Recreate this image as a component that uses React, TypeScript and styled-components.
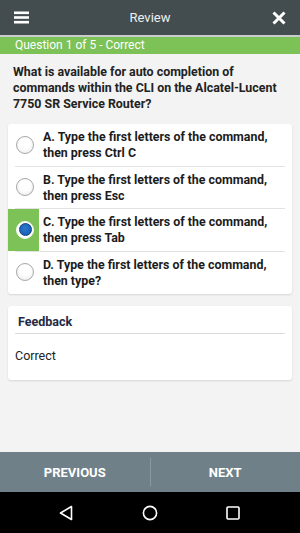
import React from "react";
import styled, { createGlobalStyle } from "styled-components";

const Global = createGlobalStyle`
  html, body { margin: 0; padding: 0; }
  body { font-family: Roboto, "Noto Sans", Arial, sans-serif; background: #f3f3f3; }
  * { box-sizing: border-box; }
`;

const Screen = styled.div`
  width: 300px;
  height: 533px;
  display: flex;
  flex-direction: column;
  background: #f3f3f3;
  overflow: hidden;
`;

const Header = styled.div`
  height: 37px;
  background: #434d50;
  border-bottom: 2px solid #c8cccc;
  display: flex;
  align-items: center;
  justify-content: space-between;
  padding: 0 12px 0 12px;
  color: #fff;
`;

const Title = styled.div`
  font-size: 13px;
  color: #eef0f0;
`;

const IconBtn = styled.div`
  width: 18px;
  height: 18px;
  display: flex;
  align-items: center;
  justify-content: center;
`;

const StatusBar = styled.div`
  height: 17px;
  background: #7cc256;
  color: #fff;
  font-size: 12px;
  line-height: 17px;
  padding-left: 15px;
`;

const Question = styled.div`
  padding: 10px 13px 12px 13px;
  font-size: 12.4px;
  font-weight: 700;
  line-height: 16px;
  color: #222;
  white-space: nowrap;
`;

const Card = styled.div`
  margin: 0 8px;
  background: #fff;
  border-radius: 3px;
  box-shadow: 0 1px 2px rgba(0, 0, 0, 0.12);
`;

const Options = styled(Card)`
  display: flex;
  flex-direction: column;
`;

const Row = styled.div<{ $last?: boolean }>`
  position: relative;
  height: 42.5px;
  display: flex;
  align-items: stretch;
  &::after {
    content: "";
    display: ${(p) => (p.$last ? "none" : "block")};
    position: absolute;
    left: 7px;
    right: 7px;
    bottom: 0;
    height: 1px;
    background: #e2e2e2;
  }
`;

const RadioCell = styled.div<{ $selected?: boolean }>`
  width: 31px;
  flex: none;
  display: flex;
  align-items: center;
  padding-left: 8px;
  background: ${(p) => (p.$selected ? "#7cc256" : "transparent")};
  margin-bottom: 1px;
`;

const Radio = styled.div<{ $selected?: boolean }>`
  width: 18px;
  height: 18px;
  border-radius: 50%;
  border: 1px solid ${(p) => (p.$selected ? "#f4f4f4" : "#a8a8a8")};
  background: ${(p) =>
    p.$selected ? "#fff" : "radial-gradient(circle at 50% 40%, #ffffff 40%, #e6e6e6 100%)"};
  display: flex;
  align-items: center;
  justify-content: center;
`;

const Dot = styled.div`
  width: 13px;
  height: 13px;
  border-radius: 50%;
  background: radial-gradient(circle at 45% 40%, #2a78d0 0%, #1558a8 100%);
  border: 1px solid #0d3f7a;
`;

const OptionText = styled.div`
  padding-left: 4px;
  font-size: 12.4px;
  font-weight: 700;
  line-height: 16px;
  color: #1c1c1c;
  display: flex;
  align-items: center;
  white-space: nowrap;
`;

const Feedback = styled(Card)`
  margin-top: 12px;
  height: 74px;
  padding: 0 7px;
`;

const FeedbackTitle = styled.div`
  height: 28px;
  padding: 8px 0 0 3px;
  font-size: 12.5px;
  font-weight: 700;
  color: #1f2a44;
  border-bottom: 1px solid #dcdcdc;
  line-height: 16px;
`;

const FeedbackBody = styled.div`
  padding-top: 14px;
  font-size: 12.5px;
  color: #222;
  line-height: 16px;
`;

const Spacer = styled.div`
  flex: 1;
`;

const BottomBar = styled.div`
  height: 40px;
  background: #6f8089;
  display: flex;
  align-items: center;
`;

const NavButton = styled.div`
  flex: 1;
  text-align: center;
  color: #fff;
  font-weight: 700;
  font-size: 13px;
`;

const Divider = styled.div`
  width: 1px;
  height: 28px;
  background: #8a989f;
`;

const SystemBar = styled.div`
  height: 41px;
  background: #000;
  display: flex;
  align-items: center;
  justify-content: space-between;
  padding: 0 60px 0 59px;
`;

const options = [
  ["A. Type the first letters of the command,", "then press Ctrl C"],
  ["B. Type the first letters of the command,", "then press Esc"],
  ["C. Type the first letters of the command,", "then press Tab"],
  ["D. Type the first letters of the command,", "then type?"],
];

export default function App() {
  return (
    <>
      <Global />
      <Screen>
        <Header>
          <IconBtn>
            <svg width="15" height="13" viewBox="0 0 15 13">
              <rect x="0" y="0.5" width="15" height="2.6" fill="#fff" />
              <rect x="0" y="5.2" width="15" height="2.6" fill="#fff" />
              <rect x="0" y="9.9" width="15" height="2.6" fill="#fff" />
            </svg>
          </IconBtn>
          <Title>Review</Title>
          <IconBtn>
            <svg width="14" height="14" viewBox="0 0 14 14">
              <path d="M1.5 1.5 L12.5 12.5 M12.5 1.5 L1.5 12.5" stroke="#fff" strokeWidth="3" />
            </svg>
          </IconBtn>
        </Header>
        <StatusBar>Question 1 of 5 - Correct</StatusBar>
        <Question>
          What is available for auto completion of
          <br />
          commands within the CLI on the Alcatel-Lucent
          <br />
          7750 SR Service Router?
        </Question>
        <Options>
          {options.map((o, i) => (
            <Row key={i} $last={i === options.length - 1}>
              <RadioCell $selected={i === 2}>
                <Radio $selected={i === 2}>{i === 2 && <Dot />}</Radio>
              </RadioCell>
              <OptionText>
                {o[0]}
                <br />
                {o[1]}
              </OptionText>
            </Row>
          ))}
        </Options>
        <Feedback>
          <FeedbackTitle>Feedback</FeedbackTitle>
          <FeedbackBody>Correct</FeedbackBody>
        </Feedback>
        <Spacer />
        <BottomBar>
          <NavButton>PREVIOUS</NavButton>
          <Divider />
          <NavButton>NEXT</NavButton>
        </BottomBar>
        <SystemBar>
          <svg width="14" height="16" viewBox="0 0 14 16">
            <path d="M12.5 1.5 L1.5 8 L12.5 14.5 Z" fill="none" stroke="#fff" strokeWidth="1.6" strokeLinejoin="round" />
          </svg>
          <svg width="16" height="16" viewBox="0 0 16 16">
            <circle cx="8" cy="8" r="6.6" fill="none" stroke="#fff" strokeWidth="1.6" />
          </svg>
          <svg width="14" height="14" viewBox="0 0 14 14">
            <rect x="1" y="1" width="12" height="12" rx="1" fill="none" stroke="#fff" strokeWidth="1.6" />
          </svg>
        </SystemBar>
      </Screen>
    </>
  );
}
